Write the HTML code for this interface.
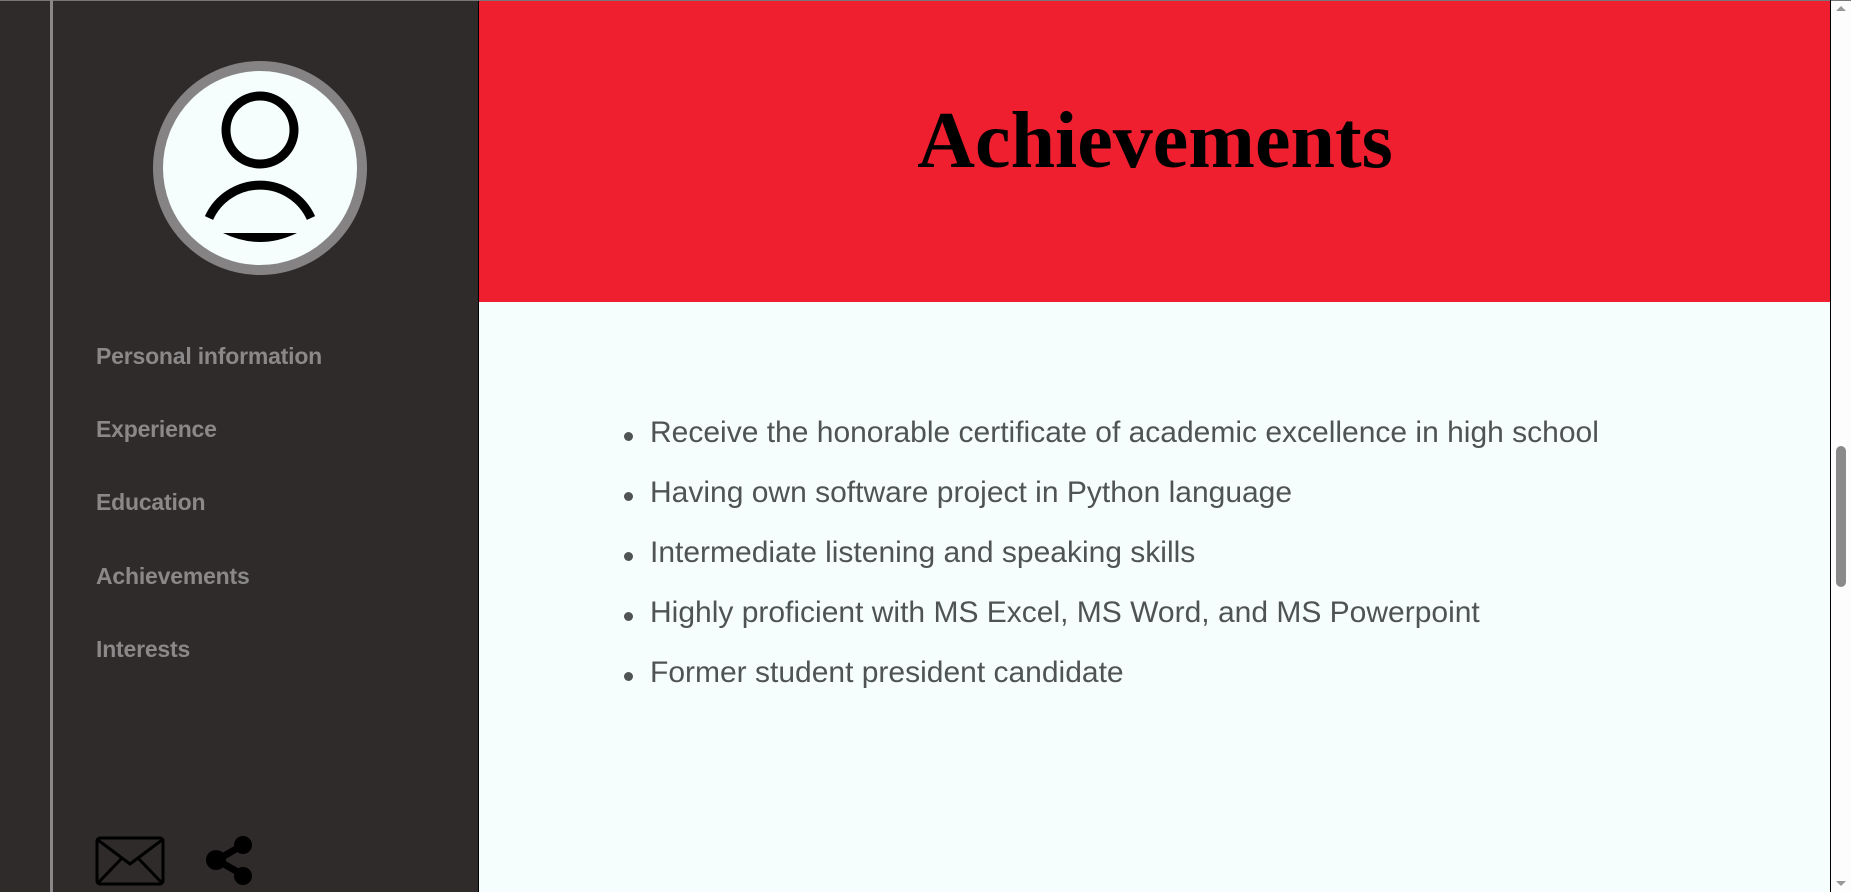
<!DOCTYPE html>
<html><head><style>
html,body{margin:0;padding:0;width:1851px;height:892px;overflow:hidden;background:#2f2b2a;}
.top{position:absolute;left:0;top:0;width:1851px;height:1px;background:#777;}
.vline{position:absolute;left:50px;top:0;width:3px;height:892px;background:#8a8888;}
.main{position:absolute;left:478px;top:1px;width:1352px;height:891px;background:#f5fefd;border-left:1px solid #000;}
.hdr{position:absolute;left:0;top:0;width:1352px;height:301px;background:#ef1f2f;}
h1{position:absolute;left:0;width:1352px;top:0;margin:0;text-align:center;font:bold 80px "Liberation Serif",serif;color:#000;line-height:1;padding-top:100px;}
.rb{position:absolute;left:1830px;top:0;width:1px;height:892px;background:#000;}
.sb{position:absolute;left:1831px;top:1px;width:20px;height:891px;background:#fdfdfd;}
.thumb{position:absolute;left:1836px;top:446px;width:10px;height:141px;background:#8a8a8a;border-radius:5px;}
.nav{position:absolute;left:96px;font:bold 23px "Liberation Sans",sans-serif;color:#8a8888;letter-spacing:-0.2px;}
ul{position:absolute;left:650px;top:413px;margin:0;padding:0;font:30px "Liberation Sans",sans-serif;color:#4f5353;list-style:none;}
li{height:60px;line-height:40px;position:relative;}
li:before{content:"";position:absolute;left:-26px;top:19px;width:9px;height:9px;border-radius:50%;background:#4f5353;}
</style></head><body>
<div class="top"></div>
<div class="vline"></div>
<svg style="position:absolute;left:153px;top:61px" width="214" height="214" viewBox="0 0 214 214">
<circle cx="107" cy="107" r="102" fill="#f5fefd" stroke="#858383" stroke-width="10"/>
<circle cx="107" cy="69" r="34" fill="none" stroke="#000" stroke-width="9"/>
<path d="M56 157 A56 56 0 0 1 158 157" fill="none" stroke="#000" stroke-width="9"/>
<path d="M70 172 Q107 190 144 172 Z" fill="#000"/>
</svg>
<div class="nav" style="top:343px">Personal information</div>
<div class="nav" style="top:416px">Experience</div>
<div class="nav" style="top:489px">Education</div>
<div class="nav" style="top:563px">Achievements</div>
<div class="nav" style="top:636px">Interests</div>
<svg style="position:absolute;left:95px;top:836px" width="71" height="51" viewBox="0 0 71 51">
<rect x="2" y="2" width="66" height="46" rx="3" fill="none" stroke="#000" stroke-width="3"/>
<path d="M3 4 L35 28 L67 4 M3 47 L27 22 M67 47 L43 22" fill="none" stroke="#000" stroke-width="3"/>
</svg>
<svg style="position:absolute;left:203px;top:836px" width="52" height="52" viewBox="0 0 52 52">
<path d="M14 24 L40 9 M14 24 L40 39" stroke="#000" stroke-width="7"/>
<circle cx="40" cy="9" r="9"/><circle cx="13" cy="24" r="10"/><circle cx="40" cy="40" r="9"/>
</svg>
<div class="main">
<div class="hdr"><h1>Achievements</h1></div>
</div>
<ul>
<li>Receive the honorable certificate of academic excellence in high school</li>
<li>Having own software project in Python language</li>
<li>Intermediate listening and speaking skills</li>
<li>Highly proficient with MS Excel, MS Word, and MS Powerpoint</li>
<li>Former student president candidate</li>
</ul>
<div class="rb"></div>
<div class="sb"></div>
<div class="thumb"></div>
<svg style="position:absolute;left:1835px;top:4px" width="12" height="8"><path d="M1 7 L6 2 L11 7Z" fill="#999"/></svg>
<svg style="position:absolute;left:1835px;top:880px" width="12" height="8"><path d="M1 1 L6 6 L11 1Z" fill="#999"/></svg>
</body></html>
